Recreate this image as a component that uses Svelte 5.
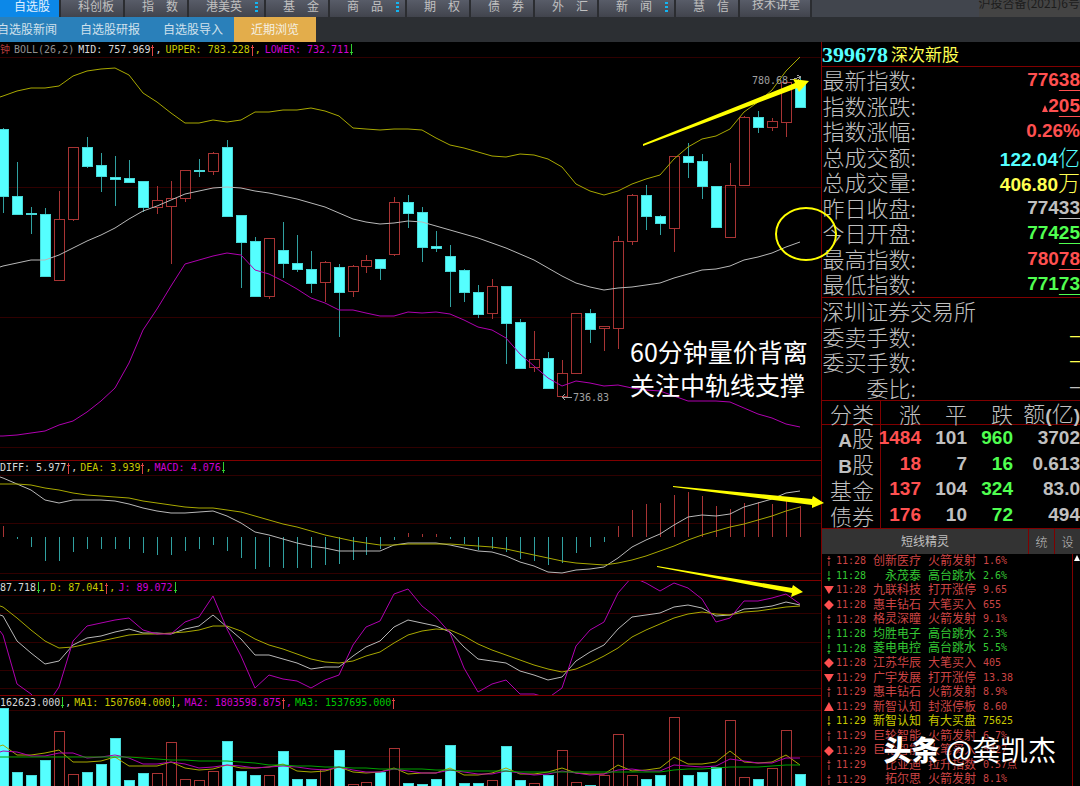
<script lang="ts">
	type Tone = 'red' | 'green' | 'yellow' | 'cyan' | 'grey' | 'white' | 'magenta' | 'lime';
	type Reading = { text: string; tone: Tone; trend: 'up' | 'down' };

	const tabs = [
		{ label: '自选股', active: true },
		{ label: '科创板' },
		{ label: '指　数' },
		{ label: '港美英', more: true },
		{ label: '基　金' },
		{ label: '商　品', more: true },
		{ label: '期　权' },
		{ label: '债　券' },
		{ label: '外　汇' },
		{ label: '新　闻', more: true },
		{ label: '慧　信' },
		{ label: '技术讲堂', last: true }
	];
	const subTabs = ['自选股新闻', '自选股研报', '自选股导入'];

	const bollReadings: Reading[] = [
		{ text: 'MID: 757.969', tone: 'white', trend: 'up' },
		{ text: 'UPPER: 783.228', tone: 'yellow', trend: 'up' },
		{ text: 'LOWER: 732.711', tone: 'magenta', trend: 'down' }
	];
	const macdReadings: Reading[] = [
		{ text: 'DIFF: 5.977', tone: 'white', trend: 'up' },
		{ text: 'DEA: 3.939', tone: 'yellow', trend: 'up' },
		{ text: 'MACD: 4.076', tone: 'magenta', trend: 'down' }
	];
	const kdjReadings: Reading[] = [
		{ text: '87.718', tone: 'white', trend: 'down' },
		{ text: 'D: 87.041', tone: 'yellow', trend: 'up' },
		{ text: 'J: 89.072', tone: 'magenta', trend: 'down' }
	];
	const volReadings: Reading[] = [
		{ text: '162623.000', tone: 'white', trend: 'down' },
		{ text: 'MA1: 1507604.000', tone: 'yellow', trend: 'down' },
		{ text: 'MA2: 1803598.875', tone: 'magenta', trend: 'up' },
		{ text: 'MA3: 1537695.000', tone: 'lime', trend: 'up' }
	];

	// rising?, body top, body bottom, high, low
	const candles = [
		[0, 129, 196, 128, 213], [0, 196, 214, 162, 214], [0, 213, 214, 207, 234], [0, 214, 276, 208, 276],
		[1, 219, 280, 191, 280], [1, 147, 219, 147, 221], [0, 147, 166, 137, 168], [0, 165, 176, 153, 192],
		[0, 177, 179, 156, 206], [0, 178, 182, 160, 183], [0, 181, 207, 181, 212], [1, 200, 207, 186, 214],
		[1, 198, 206, 181, 264], [1, 170, 198, 170, 202], [0, 170, 171, 159, 177], [1, 153, 171, 152, 175],
		[0, 147, 216, 140, 216], [0, 215, 242, 215, 288], [0, 241, 296, 237, 297], [1, 238, 296, 238, 299],
		[0, 250, 263, 222, 278], [0, 263, 269, 235, 272], [0, 269, 283, 251, 293], [1, 262, 282, 261, 302],
		[0, 267, 292, 264, 337], [1, 266, 291, 265, 297], [1, 260, 266, 255, 273], [0, 259, 268, 259, 280],
		[1, 202, 254, 197, 256], [0, 202, 213, 195, 228], [0, 212, 247, 207, 262], [0, 246, 248, 231, 252],
		[0, 256, 271, 245, 307], [0, 270, 292, 269, 302], [0, 292, 314, 285, 318], [1, 286, 313, 279, 319],
		[0, 286, 323, 286, 364], [0, 322, 368, 319, 369], [1, 359, 367, 331, 372], [0, 358, 388, 352, 388],
		[1, 373, 396, 360, 396], [1, 313, 373, 313, 374], [0, 313, 329, 309, 343], [1, 326, 328, 326, 351],
		[1, 241, 328, 236, 349], [1, 195, 241, 194, 245], [0, 195, 216, 185, 230], [0, 216, 223, 215, 235],
		[1, 156, 228, 156, 252], [0, 156, 162, 143, 178], [0, 161, 186, 154, 199], [0, 186, 227, 186, 227],
		[1, 185, 237, 163, 237], [1, 117, 185, 116, 185], [0, 117, 127, 111, 133], [1, 121, 127, 118, 131],
		[1, 82, 122, 82, 137], [0, 83, 107, 76, 107]
	];

	const upper = [
		96, 91, 88, 88, 86, 76, 71, 69, 68, 75, 93, 102, 113, 123, 123, 120, 122, 120, 112, 112, 110, 110, 108,
		111, 116, 128, 129, 130, 129, 129, 130, 138, 145, 148, 152, 156, 157, 154, 155, 159, 167, 184, 191, 195,
		191, 184, 179, 175, 159, 147, 139, 136, 129, 112, 102, 90, 71, 57
	];
	const mid = [
		266, 263, 260, 260, 255, 248, 241, 235, 228, 219, 211, 206, 200, 194, 191, 188, 187, 188, 191, 193, 196,
		199, 203, 207, 213, 219, 222, 224, 223, 221, 222, 226, 230, 234, 238, 243, 248, 254, 260, 268, 276, 283,
		287, 290, 288, 287, 285, 283, 278, 274, 270, 269, 266, 260, 257, 253, 247, 242
	];
	const lower = [
		436, 435, 433, 431, 425, 421, 412, 401, 388, 363, 330, 309, 286, 264, 260, 256, 253, 255, 270, 274, 281,
		289, 298, 303, 310, 310, 313, 316, 316, 312, 313, 312, 314, 320, 327, 330, 338, 354, 366, 378, 386, 381,
		383, 386, 385, 388, 390, 391, 396, 401, 401, 401, 402, 408, 414, 418, 424, 427
	];
	const diff = [
		478, 484, 490, 500, 503, 500, 500, 500, 501, 504, 508, 511, 513, 513, 512, 511, 516, 523, 532, 535, 539,
		543, 546, 548, 551, 551, 551, 551, 545, 543, 543, 543, 545, 548, 551, 552, 556, 562, 566, 572, 573, 570,
		569, 567, 558, 547, 540, 534, 525, 517, 515, 516, 514, 507, 503, 499, 493, 491
	];
	const dea = [
		484, 484, 485, 488, 490, 493, 495, 496, 497, 498, 501, 503, 505, 507, 508, 508, 510, 512, 516, 520, 524,
		527, 531, 535, 538, 541, 543, 545, 545, 544, 544, 544, 544, 545, 546, 547, 549, 552, 555, 558, 561, 563,
		564, 565, 563, 560, 556, 551, 546, 540, 535, 531, 527, 524, 520, 516, 511, 507
	];
	const macd = [
		526, 539, 547, 561, 561, 552, 549, 549, 549, 549, 553, 555, 555, 551, 549, 545, 551, 558, 569, 567, 568,
		568, 568, 565, 564, 560, 555, 549, 540, 533, 534, 534, 539, 544, 550, 549, 552, 559, 561, 565, 563, 553,
		547, 542, 526, 510, 504, 503, 495, 492, 496, 506, 509, 503, 502, 504, 500, 506
	];
	const kLine = [
		616, 641, 653, 664, 661, 645, 638, 636, 632, 629, 633, 633, 634, 629, 626, 615, 627, 639, 655, 655, 659,
		663, 669, 667, 667, 656, 647, 641, 627, 620, 623, 626, 632, 647, 659, 661, 663, 671, 675, 680, 677, 661,
		652, 645, 629, 617, 615, 613, 607, 605, 608, 616, 615, 609, 608, 606, 602, 605
	];
	const dLine = [
		607, 618, 630, 641, 648, 647, 644, 641, 638, 635, 634, 634, 633, 632, 630, 626, 626, 631, 639, 645, 649,
		654, 659, 662, 663, 661, 656, 652, 643, 635, 631, 629, 630, 636, 644, 650, 655, 660, 665, 669, 672, 669,
		663, 656, 648, 637, 630, 624, 618, 614, 612, 614, 615, 612, 611, 609, 607, 606
	];
	const jLine = [
		635, 684, 694, 708, 687, 641, 626, 623, 620, 618, 630, 634, 634, 622, 617, 596, 629, 656, 688, 675, 679,
		681, 688, 680, 675, 645, 627, 621, 594, 589, 606, 617, 633, 668, 692, 684, 680, 694, 694, 698, 688, 646,
		630, 622, 593, 577, 583, 591, 583, 588, 599, 622, 618, 601, 601, 598, 594, 604
	];
	const volume = [
		708, 772, 775, 760, 731, 774, 772, 764, 738, 780, 773, 773, 742, 779, 780, 771, 741, 771, 775, 775, 751,
		779, 779, 769, 750, 784, 782, 772, 748, 783, 784, 779, 745, 783, 783, 780, 746, 780, 783, 775, 750, 782,
		785, 775, 734, 775, 779, 775, 717, 775, 772, 767, 720, 777, 779, 768, 730, 774
	];
	const volumeRising = new Set([4, 5, 11, 12, 13, 14, 15, 19, 23, 25, 26, 28, 35, 38, 40, 41, 43, 44, 45, 48, 52, 53, 55, 56]);
	const ma1 = [
		745, 755, 755, 753, 750, 762, 762, 761, 757, 766, 766, 766, 762, 768, 770, 769, 765, 768, 768, 767, 764,
		771, 772, 771, 767, 772, 773, 772, 768, 774, 773, 773, 768, 775, 775, 773, 768, 774, 774, 772, 768, 773,
		774, 774, 765, 771, 770, 768, 757, 764, 764, 762, 751, 762, 763, 762, 755, 765
	];
	const ma2 = [
		751, 752, 756, 756, 753, 753, 758, 757, 755, 758, 764, 764, 762, 764, 768, 767, 765, 766, 768, 767, 766,
		767, 769, 770, 767, 770, 772, 772, 769, 771, 773, 773, 770, 772, 774, 774, 771, 773, 775, 774, 771, 773,
		775, 774, 770, 769, 771, 771, 765, 766, 767, 766, 759, 761, 763, 763, 758, 758
	];
	const ma3 = [
		757, 757, 757, 757, 757, 757, 757, 757, 757, 757, 758, 759, 760, 760, 761, 761, 761, 762, 763, 765, 765,
		766, 766, 767, 767, 768, 768, 769, 769, 769, 769, 770, 770, 771, 771, 771, 771, 772, 772, 772, 772, 772,
		772, 772, 772, 772, 772, 772, 770, 769, 769, 768, 767, 767, 767, 766, 765, 765
	];

	const cx = (i: number) => Math.round(3 + i * 13.98);
	const points = (ys: number[]) => ys.map((y, i) => `${cx(i)},${y}`).join(' ');

	const quotes: { name: string; head?: string; tail?: string; unit?: string; tone: Tone; rise?: boolean }[] = [
		{ name: '最新指数:', head: '776', tail: '38', tone: 'red' },
		{ name: '指数涨跌:', head: '2', tail: '05', tone: 'red', rise: true },
		{ name: '指数涨幅:', head: '0.26%', tone: 'red' },
		{ name: '总成交额:', head: '122.04', unit: '亿', tone: 'cyan' },
		{ name: '总成交量:', head: '406.80', unit: '万', tone: 'yellow' },
		{ name: '昨日收盘:', head: '774', tail: '33', tone: 'grey' },
		{ name: '今日开盘:', head: '774', tail: '25', tone: 'green' },
		{ name: '最高指数:', head: '780', tail: '78', tone: 'red' },
		{ name: '最低指数:', head: '771', tail: '73', tone: 'green' }
	];
	const orders: { name: string; tone: Tone }[] = [
		{ name: '委卖手数:', tone: 'yellow' },
		{ name: '委买手数:', tone: 'yellow' },
		{ name: '委比:', tone: 'grey' }
	];
	const breadth = [
		['A', '股', '1484', '101', '960', '3702'],
		['B', '股', '18', '7', '16', '0.613'],
		['', '基金', '137', '104', '324', '83.0'],
		['', '债券', '176', '10', '72', '494']
	];
	const alerts = [
		['up', 'red', '11:28', '创新医疗', '火箭发射', '1.6%'],
		['down', 'green', '11:28', '永茂泰', '高台跳水', '2.6%'],
		['tri-down', 'red', '11:28', '九联科技', '打开涨停', '9.65'],
		['diamond', 'red', '11:28', '惠丰钻石', '大笔买入', '655'],
		['up', 'red', '11:28', '格灵深瞳', '火箭发射', '9.1%'],
		['down', 'green', '11:28', '均胜电子', '高台跳水', '2.3%'],
		['down', 'green', '11:28', '菱电电控', '高台跳水', '5.5%'],
		['diamond', 'red', '11:28', '江苏华辰', '大笔买入', '405'],
		['tri-down', 'red', '11:29', '广宇发展', '打开涨停', '13.38'],
		['up', 'red', '11:29', '惠丰钻石', '火箭发射', '8.9%'],
		['tri-up', 'red', '11:29', '新智认知', '封涨停板', '8.60'],
		['down', 'yellow', '11:29', '新智认知', '有大买盘', '75625'],
		['up', 'red', '11:29', '巨轮智能', '火箭发射', '6.7%'],
		['diamond', 'red', '11:29', '巨轮智能', '大笔买入', '5427'],
		['up', 'red', '11:29', '比亚迪', '拉升指数', '0.57点'],
		['up', 'red', '11:29', '拓尔思', '火箭发射', '8.1%']
	];
	const shapes: Record<string, string> = {
		'tri-down': '0,1 10,1 5,9',
		'tri-up': '0,9 10,9 5,0',
		diamond: '5,0 10,5 5,10 0,5'
	};
</script>

{#snippet readings(items: Reading[])}
	{#each items as r, i}
		<span class="reading {r.tone}">
			{r.text}<svg class="trend {r.trend}" viewBox="0 0 5 12"><path d="M2 1h1v11h-1zM1 3h3v1h-3z" /></svg>{i < items.length - 1 ? ',' : ''}
		</span>
	{/each}
{/snippet}

{#snippet grid(lines: number[])}
	{#each lines as y}
		<line class="grid" x1="0" x2="821" y1={y} y2={y} />
	{/each}
{/snippet}

<div class="app">
	<nav class="tabs">
		{#each tabs as tab}
			<button class="tab" class:active={tab.active} class:more={tab.more} class:last={tab.last}>
				{tab.label}
				{#if tab.more}
					<svg class="dots" viewBox="0 0 3 10"><path d="M0 0h3v2h-3zM0 4h3v2h-3zM0 8h3v2h-3z" /></svg>
				{/if}
			</button>
		{/each}
		<span class="licence">沪投咨备(2021)6号</span>
	</nav>
	<nav class="subtabs">
		<div class="sub-links">
			{#each subTabs as label}
				<a href="#top">{label}</a>
			{/each}
		</div>
		<a class="recent" href="#recent">近期浏览</a>
	</nav>

	<div class="body">
		<main class="charts">
			<section class="panel">
				<header class="legend boll">
					<span class="red">钟</span>
					<span class="grey">BOLL(26,2)</span>
					{@render readings(bollReadings)}
				</header>
				<svg class="plot" viewBox="0 57 821 403">
					{@render grid([57, 187, 317, 447])}
					{#each candles as [rising, top, bottom, high, low], i}
						{#if rising}
							<path class="rise" d="M{cx(i)} {high}V{top}M{cx(i)} {bottom}V{low}" />
							<rect class="rise" x={cx(i) - 5} y={top} width="10" height={bottom - top} />
						{:else}
							<path class="fall-wick" d="M{cx(i)} {high}V{low}" />
							<rect class="fall" x={cx(i) - 5} y={top} width="10" height={bottom - top} />
						{/if}
					{/each}
					<polyline class="line y" points="0,97 {points(upper)}" />
					<polyline class="line w" points="0,267 {points(mid)}" />
					<polyline class="line m" points="0,436 {points(lower)}" />
					<text class="price" x="752" y="84">780.68</text>
					<path class="pointer" d="M790 80L801 77M797 75L801 77L798 80" />
					<text class="price" x="573" y="401">736.83</text>
					<path class="pointer" d="M562 397H572M565 394L562 397L565 400" />
				</svg>
			</section>

			<section class="panel">
				<header class="legend">{@render readings(macdReadings)}</header>
				<svg class="plot" viewBox="0 475 821 105">
					{@render grid([475, 523, 573])}
					{#each macd as y, i}
						<path class={y < 537 ? 'rise' : 'fall-wick'} d="M{cx(i)} 537V{y}" />
					{/each}
					<polyline class="line w" points="0,477 {points(diff)}" />
					<polyline class="line y" points="0,484 {points(dea)}" />
				</svg>
			</section>

			<section class="panel clip">
				<header class="legend">{@render readings(kdjReadings)}</header>
				<svg class="plot" viewBox="0 595 821 100">
					{@render grid([595, 613, 642, 670, 688])}
					<polyline class="line w" points="0,615 {points(kLine)}" />
					<polyline class="line y" points="0,606 {points(dLine)}" />
					<polyline class="line m" points="0,631 {points(jLine)}" />
				</svg>
			</section>

			<section class="panel">
				<header class="legend">{@render readings(volReadings)}</header>
				<svg class="plot" viewBox="0 710 821 76">
					{@render grid([710, 756])}
					{#each volume as y, i}
						<rect class={volumeRising.has(i) ? 'rise' : 'fall'} x={cx(i) - 5} {y} width="10" height={790 - y} />
					{/each}
					<polyline class="line y" points="0,746 {points(ma1)}" />
					<polyline class="line m" points="0,752 {points(ma2)}" />
					<polyline class="line g" points="0,757 {points(ma3)}" />
				</svg>
			</section>

			<!-- hand-drawn marks over the charts -->
			<svg class="marks" viewBox="0 42 821 744">
				<polygon points="643,144 795,83 793,79 809,81 799,92 797,88 643,146" />
				<polygon points="673,486 812,499 813,496 824,503 812,508 812,505 673,487" />
				<polygon points="657,566 792,588 793,585 803,592 791,597 792,593 657,567" />
				<ellipse cx="806" cy="234" rx="30" ry="26" />
				<text x="630" y="362">60分钟量价背离</text>
				<text x="630" y="395">关注中轨线支撑</text>
			</svg>
		</main>

		<aside class="side">
			<h1 class="title"><span class="code">399678</span>深次新股</h1>
			<dl class="quotes">
				{#each quotes as q}
					<div class="quote">
						<dt>{q.name}</dt>
						<dd class={q.tone}>
							{#if q.rise}<svg class="rise-mark" viewBox="0 0 6 7"><polygon points="3,0 6,7 0,7" /></svg>{/if}<span>{q.head}{#if q.tail}<u>{q.tail}</u>{/if}</span>{#if q.unit}<span class="unit">{q.unit}</span>{/if}
						</dd>
					</div>
				{/each}
			</dl>
			<dl class="quotes orders">
				<div class="quote"><dt>深圳证券交易所</dt></div>
				{#each orders as o}
					<div class="quote">
						<dt>{o.name}</dt>
						<dd class="none {o.tone}">—</dd>
					</div>
				{/each}
			</dl>
			<table class="breadth">
				<thead>
					<tr><th>分类</th><th>涨</th><th>平</th><th>跌</th><th>额<b>(</b>亿<b>)</b></th></tr>
				</thead>
				<tbody>
					{#each breadth as [letter, kind, up, flat, down, amount]}
						<tr>
							<th><b>{letter}</b>{kind}</th>
							<td class="red"><span>{up}</span></td>
							<td class="grey">{flat}</td>
							<td class="green">{down}</td>
							<td class="grey">{amount}</td>
						</tr>
					{/each}
				</tbody>
			</table>
			<div class="alert-bar">
				<h2>短线精灵</h2>
				<button>统</button>
				<button>设</button>
			</div>
			<div class="alert-box">
				<ul class="alerts">
					{#each alerts as [icon, tone, time, name, event, value]}
						<li class={tone}>
							<span class="when">
								{#if shapes[icon]}
									<svg class="shape" viewBox="0 0 10 10"><polygon points={shapes[icon]} /></svg>
								{:else}
									<svg class="arrow {icon}" viewBox="0 0 10 10"><path d="M4.5 0h1v4h-1zM4.5 5h1v5h-1zM3.5 2h3v1h-3z" /></svg>
								{/if}
								{time}
							</span>
							<span class="name">{name}</span>
							<span>{event}</span>
							<span>{value}</span>
						</li>
					{/each}
				</ul>
				<div class="scroll"><svg viewBox="0 0 6 6"><polygon points="3,0 6,6 0,6" /></svg></div>
				<p class="sign"><strong>头条</strong>@龚凯杰</p>
			</div>
		</aside>
	</div>
</div>

<style>
	:global(body) {
		background: #000;
	}
	.app {
		font-family: 'DejaVu Sans Mono', 'Noto Sans CJK SC', monospace;
		font-size: 12px;
		color: #c0c0c0;
		overflow: hidden;
	}
	button {
		font: inherit;
		color: inherit;
		border: 0;
		padding: 0;
		background: none;
	}
	a {
		color: inherit;
		text-decoration: none;
	}
	.red { color: #ff5050; }
	.green { color: #50ff50; }
	.yellow { color: #ffff50; }
	.cyan { color: #55ffff; }
	.grey { color: #c0c0c0; }
	.white { color: #d8d8d8; }
	.magenta { color: #d000d0; }
	.lime { color: #00c800; }

	.tabs {
		display: flex;
		height: 17px;
		overflow: hidden;
		background: #41454d;
		font-family: 'Noto Sans CJK SC', sans-serif;
	}
	.tab {
		box-sizing: border-box;
		flex: 0 0 64px;
		display: flex;
		justify-content: space-between;
		padding: 0 6px 0 17px;
		height: 17px;
		line-height: 12px;
		white-space: nowrap;
		border-right: 2px solid #2b2d31;
		background: linear-gradient(#585c68, #41444d);
	}
	.tab.more {
		flex-basis: 77px;
	}
	.tab.active {
		flex-basis: 61px;
		padding-left: 14px;
		color: #e0f0ff;
		background: #0c88e8;
	}
	.tab.last {
		flex-basis: 72px;
		padding-left: 12px;
		line-height: 8px;
	}
	.dots {
		width: 3px;
		height: 10px;
		margin-top: 2px;
		fill: #14b4f0;
	}
	.licence {
		flex: 0 0 100px;
		margin-left: auto;
		line-height: 6px;
		white-space: nowrap;
		color: #1c1c1c;
		background: #444;
	}
	.subtabs {
		display: flex;
		height: 25px;
		line-height: 24px;
		background: #2c2f33;
		color: #d0e0ec;
		font-family: 'Noto Sans CJK SC', sans-serif;
	}
	.sub-links {
		display: flex;
		gap: 23px;
		margin-left: -3px;
		padding-right: 11px;
		background: #2a80ba;
	}
	.recent {
		padding: 0 17px;
		background: #e3ad4b;
		color: #f4f0e4;
	}

	.body {
		display: grid;
		grid-template-columns: minmax(0, 1fr) 259px;
	}
	.charts {
		position: relative;
	}
	.panel + .panel {
		border-top: 1px solid #800000;
	}
	.clip {
		overflow: hidden;
	}
	.legend {
		display: flex;
		gap: 3px;
		height: 14px;
		line-height: 14px;
		font-size: 10px;
		white-space: pre;
	}
	.boll {
		height: 15px;
		line-height: 15px;
		gap: 4px;
	}
	.legend .red { color: #b43c3c; }
	.legend .grey { color: #909090; }
	.legend .yellow { color: #c8c800; }
	.reading {
		display: flex;
		align-items: center;
	}
	.trend {
		width: 5px;
		height: 12px;
	}
	.trend.up { fill: #e04444; }
	.trend.down {
		fill: #30d030;
		transform: rotate(180deg);
	}
	.plot {
		display: block;
		width: 100%;
		overflow: visible;
		shape-rendering: crispEdges;
	}
	.grid {
		stroke: #300000;
	}
	.rise {
		fill: none;
		stroke: #a83434;
	}
	.fall {
		fill: #55ffff;
		stroke: #48d8d8;
	}
	.fall-wick {
		stroke: #30a0a0;
	}
	.line {
		fill: none;
		shape-rendering: auto;
	}
	.line.y { stroke: #a8a800; }
	.line.w { stroke: #b8b8b8; }
	.line.m { stroke: #b000b0; }
	.line.g { stroke: #00a000; }
	.price {
		font-size: 10px;
		fill: #a0a0a0;
	}
	.pointer {
		fill: none;
		stroke: #a0a0a0;
	}
	.marks {
		position: absolute;
		inset: 0;
		z-index: 1;
		width: 100%;
		overflow: visible;
		pointer-events: none;
		fill: #ff0;
	}
	.marks ellipse {
		fill: none;
		stroke: #ff0;
		stroke-width: 2;
	}
	.marks text {
		fill: #fff;
		font: 25px 'Noto Sans CJK SC', sans-serif;
	}

	.side {
		border-left: 1px solid #800000;
		font-family: 'Noto Sans CJK SC', sans-serif;
		font-weight: 300;
		white-space: nowrap;
	}
	.title {
		display: flex;
		gap: 3px;
		height: 24px;
		line-height: 24px;
		margin: 0;
		border-bottom: 1px solid #800000;
		font-size: 17px;
		font-weight: 400;
		color: #ffff50;
	}
	.code {
		font: bold 22px/26px 'Liberation Serif', serif;
		color: #55ffff;
	}
	.quotes {
		display: grid;
		grid-auto-rows: minmax(0, 1fr);
		height: 230px;
		margin: 0;
		border-bottom: 1px solid #800000;
		font-size: 22px;
		line-height: 24px;
	}
	.orders {
		height: 102px;
	}
	.quote {
		display: flex;
		justify-content: space-between;
	}
	.quote dt {
		min-width: 94px;
		text-align: right;
	}
	.quote dd {
		display: flex;
		align-items: baseline;
		margin: 0;
		font: bold 19px/26px 'Liberation Sans', sans-serif;
	}
	.quote u {
		text-decoration-thickness: 1px;
		text-underline-offset: 4px;
		text-decoration-skip-ink: none;
	}
	.quote .none {
		font-size: 10px;
	}
	.unit {
		font: 300 22px/24px 'Noto Sans CJK SC', sans-serif;
	}
	.rise-mark {
		width: 6px;
		height: 7px;
		fill: currentColor;
	}
	.breadth {
		width: 100%;
		height: 127px;
		table-layout: fixed;
		border-collapse: collapse;
		font-size: 22px;
		line-height: 22px;
		text-align: right;
	}
	.breadth th,
	.breadth td {
		padding: 0;
		width: 46px;
	}
	.breadth th {
		font-weight: 300;
		text-align: right;
	}
	.breadth th:first-child {
		width: 52px;
		padding-right: 6px;
		border-right: 1px solid #800000;
	}
	.breadth th:nth-child(2) {
		width: 40px;
	}
	.breadth th:last-child {
		width: auto;
	}
	.breadth thead {
		border-bottom: 1px solid #800000;
	}
	.breadth td {
		font: bold 19px/22px 'Liberation Sans', sans-serif;
	}
	.breadth b {
		font: bold 19px/16px 'Liberation Sans', sans-serif;
	}
	.breadth td span {
		margin-left: -6px;
	}
	.alert-bar {
		display: grid;
		grid-template-columns: 1fr 26px 26px;
		height: 25px;
		line-height: 24px;
		border-top: 1px solid #800000;
		background: #333;
	}
	.alert-bar h2 {
		margin: 0;
		font-size: 12px;
		font-weight: 400;
		text-align: center;
	}
	.alert-bar button {
		border-left: 1px solid #800000;
	}
	.alert-box {
		position: relative;
		display: grid;
		grid-template-columns: 1fr 8px;
		height: 233px;
	}
	.alerts {
		display: grid;
		grid-auto-rows: minmax(0, 1fr);
		margin: 0;
		padding: 0 0 0 2px;
		list-style: none;
		font-family: 'DejaVu Sans Mono', 'Noto Sans CJK SC', monospace;
		font-size: 10px;
		font-weight: 400;
		line-height: 14px;
	}
	.alerts li {
		display: grid;
		grid-template-columns: 42px 48px 48px 1fr;
		column-gap: 7px;
	}
	.alerts .red { color: #cc4444; }
	.alerts .green { color: #34c834; }
	.alerts .yellow { color: #c8c800; }
	.alerts li > span:nth-child(2),
	.alerts li > span:nth-child(3) {
		font-size: 12px;
	}
	.when {
		display: flex;
		align-items: center;
		gap: 2px;
	}
	.name {
		text-align: right;
	}
	.shape,
	.arrow {
		width: 10px;
		height: 10px;
		fill: #ff5050;
	}
	.arrow {
		fill: currentColor;
	}
	.arrow.down {
		transform: rotate(180deg);
	}
	.scroll {
		border-left: 1px solid #800000;
		padding: 1px 0 0 1px;
	}
	.scroll svg {
		display: block;
		width: 6px;
		height: 6px;
		fill: #fff;
	}
	.sign {
		position: absolute;
		right: 24px;
		bottom: 21px;
		display: flex;
		gap: 6px;
		margin: 0;
		font-size: 28px;
		font-weight: 400;
		line-height: 34px;
		color: #fff;
		text-shadow: 0 0 2px #000;
	}
	.sign strong {
		font-weight: 900;
	}
</style>
